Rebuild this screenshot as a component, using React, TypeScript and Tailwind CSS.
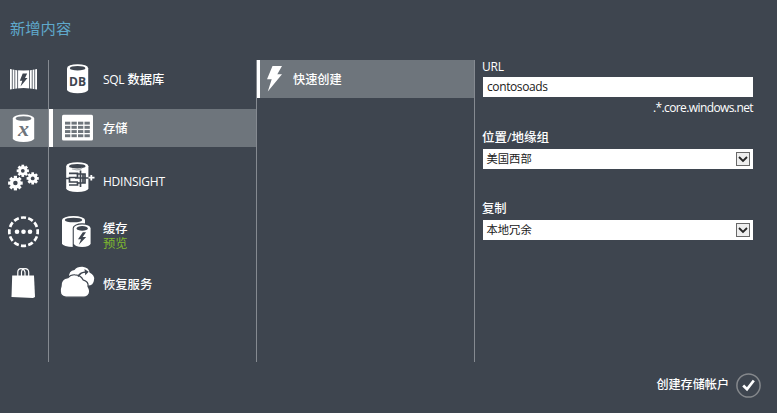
import React from 'react';

const DARK = '#3e454f';
const SEL = '#6e757c';
const BOLT = 'M5.5 0H15L10.3 8.2H15L0.8 25.5L4.7 13.2H0Z';

function Gear({ cx, cy, r }: { cx: number; cy: number; r: number }) {
  return (
    <g transform={`translate(${cx} ${cy})`}>
      {[0, 45, 90, 135].map((a) => (
        <rect key={a} x={-r * 0.22} y={-r} width={r * 0.44} height={r * 2} transform={`rotate(${a})`} fill="#fff" />
      ))}
      <circle r={r * 0.77} fill="#fff" />
      <circle r={r * 0.31} fill={DARK} />
    </g>
  );
}

function Cylinder({ x, y, w, h, hole }: { x: number; y: number; w: number; h: number; hole: string }) {
  const rx = w / 2;
  return (
    <g>
      <path
        d={`M${x} ${y + 4}A${rx} 4 0 0 1 ${x + w} ${y + 4}V${y + h - 3.5}A${rx} 3.5 0 0 1 ${x} ${y + h - 3.5}Z`}
        fill="#fff"
      />
      <ellipse cx={x + rx} cy={y + 4} rx={rx - 2.8} ry={2.3} fill={hole} />
    </g>
  );
}

function Icon({ children }: { children: React.ReactNode }) {
  return (
    <svg className="block h-[38px] w-12 shrink-0" viewBox="0 0 48 38">
      {children}
    </svg>
  );
}

function WebIcon() {
  return (
    <Icon>
      <path d="M10 9Q23.5 12 37 9V29.5Q23.5 26.5 10 29.5Z" fill="#fff" />
      <path d="M12.3 9V30M14.8 9V30M17.6 9V30M29.5 9V30M32.2 9V30M34.7 9V30" stroke={DARK} strokeWidth=".8" />
      <path d="M22.7 13.5H27.2L25 18H27.5L20.5 26.5L22.3 20.7H19.8Z" fill={DARK} />
    </Icon>
  );
}

function VariableIcon() {
  return (
    <Icon>
      <Cylinder x={12.8} y={5.5} w={21.4} h={27.5} hole={SEL} />
      <text x="23.5" y="27" textAnchor="middle" fontSize="20" fontStyle="italic" fontWeight="700" fontFamily="Liberation Serif, serif" fill={SEL} textLength="11" lengthAdjust="spacingAndGlyphs">x</text>
    </Icon>
  );
}

function GearsIcon() {
  return (
    <Icon>
      <Gear cx={22.8} cy={12.8} r={6.1} />
      <Gear cx={32.7} cy={20.4} r={6.1} />
      <Gear cx={15.4} cy={25.1} r={7.3} />
    </Icon>
  );
}

function DotsIcon() {
  return (
    <Icon>
      <circle cx="23.5" cy="19.7" r="14.2" fill="none" stroke="#fff" strokeWidth="2.7" pathLength="120" strokeDasharray="7 3" strokeDashoffset="3.5" />
      <circle cx="17" cy="19.7" r="2.3" fill="#fff" />
      <circle cx="23.5" cy="19.7" r="2.3" fill="#fff" />
      <circle cx="30" cy="19.7" r="2.3" fill="#fff" />
    </Icon>
  );
}

function BagIcon() {
  return (
    <Icon>
      <path d="M12.2 11.5H34L35 33L33 34L11.5 33Z" fill="#fff" />
      <path d="M17.8 14V8Q18 4.6 21 4.6Q24 4.6 25 8V14M21.5 12V8Q22 4.6 25 4.6Q28.4 4.6 28.7 8V14" fill="none" stroke="#fff" strokeWidth="1.2" />
    </Icon>
  );
}

function DbIcon() {
  return (
    <Icon>
      <Cylinder x={14} y={4.2} w={21.2} h={29} hole={DARK} />
      <text x="24.5" y="26" textAnchor="middle" fontSize="12.5" fontWeight="700" fontFamily="Open Sans, sans-serif" fill={DARK} textLength="17" lengthAdjust="spacingAndGlyphs">DB</text>
    </Icon>
  );
}

function TableIcon() {
  return (
    <Icon>
      <rect x="9" y="5.8" width="31" height="25.7" rx="1.5" fill="#fff" />
      {[12.7, 16.9, 21.1, 25.3].map((y) =>
        [12, 18.5, 25, 31.5].map((x) => <rect key={`${x}-${y}`} x={x} y={y} width="5.3" height="2.9" fill={SEL} />),
      )}
    </Icon>
  );
}

function HdIcon() {
  return (
    <Icon>
      <Cylinder x={13.2} y={4.2} w={22.2} h={29.8} hole={DARK} />
      <path d="M16 15.3H24.5V19.5H16.5V24H25M12.5 20.5H16M16 27H24.5V24M27.5 12.5V29M23.5 16H32V25H24M22 20H36M30 16V25" fill="none" stroke={DARK} strokeWidth="1.7" />
      <path d="M35.5 19.7H41.5M38.3 17V22.4" stroke="#fff" strokeWidth="1.8" />
      <path d="M19 11Q26 13 29 10" fill="none" stroke="#aeb2b6" strokeWidth="1.2" />
    </Icon>
  );
}

function CacheIcon() {
  return (
    <Icon>
      <Cylinder x={9} y={4} w={23} h={31} hole={DARK} />
      <path d="M19.7 16A9.3 4.7 0 0 1 38.3 16V36H19.7Z" fill={DARK} />
      <Cylinder x={20.8} y={12.4} w={16.8} h={22.6} hole={DARK} />
      <path d="M29.8 20.2L25 27.3H28L25.8 32.7L33.2 25H29.7L33 20.2Z" fill={DARK} />
    </Icon>
  );
}

function CloudIcon() {
  return (
    <Icon>
      <path d="M16 14Q15.5 6.5 21.5 6Q24 2.5 29.5 2.7Q36 3.5 36.5 8.5Q42 11 41 16Q40.5 21.5 35 21.5L24 18Z" fill="#fff" />
      <path d="M8 22.5Q7.6 14.5 15 13.7Q17.5 10.5 22 10.8Q28 11 30 15.8Q36 17.5 35 22.5Q38.5 28 35 31.5Q33 33.2 31 33.2H13Q7.5 32.5 7.3 27.5Q7 24.5 8 22.5Z" fill="#fff" stroke={DARK} strokeWidth="1.2" />
      <path d="M25 12.5Q27.5 8.2 33 8" fill="none" stroke={DARK} strokeWidth="1.6" />
      <path d="M31.5 5L35.7 7.8L32.3 11.3Z" fill={DARK} />
    </Icon>
  );
}

function SelectBox({ value }: { value: string }) {
  return (
    <div className="flex h-5 w-[270px] items-center justify-between bg-white pr-[3px] pl-[3.5px] text-[11.3px] text-[#202020]">
      <span className="-mt-px leading-4">{value}</span>
      <span className="flex size-3.5 items-center justify-center border border-[#686868] bg-[#eeeeee]">
        <svg className="block h-2 w-2.5" viewBox="0 0 10 8">
          <path d="M1 2L5 6L9 2" fill="none" stroke="#252525" strokeWidth="1.8" />
        </svg>
      </span>
    </div>
  );
}

export default function App() {
  return (
    <div className="flex h-[413px] w-[777px] flex-col overflow-hidden bg-[#3e454f] font-['Open_Sans','Noto_Sans_CJK_SC',sans-serif] whitespace-nowrap text-white">
      <h1 className="h-[60px] pt-[17px] pl-2.5 text-[15.3px] leading-[22px] font-normal text-[#5fa9cc]">新增内容</h1>

      <div className="flex h-[302px]">
        <nav className="flex w-[49px] flex-col border-r border-[#858a91]">
          <WebIcon />
          <div className="mt-[11px] bg-[#6e757c]"><VariableIcon /></div>
          <div className="mt-[11px]"><GearsIcon /></div>
          <div className="mt-[16px]"><DotsIcon /></div>
          <div className="mt-[14px]"><BagIcon /></div>
        </nav>

        <div className="flex w-[208px] flex-col border-r border-[#858a91] text-[12.3px] leading-[15px] font-medium">
          <div className="flex h-[38px] items-center pl-1">
            <DbIcon />
            <span className="ml-[2px]"><span className="text-[12px] font-normal tracking-[-0.3px]">SQL</span> 数据库</span>
          </div>
          <div className="mt-[11px] flex h-[38px] items-center border-l-4 border-white bg-[#6e757c]">
            <TableIcon />
            <span className="ml-[2px]">存储</span>
          </div>
          <div className="mt-[11px] flex h-[38px] items-center pl-1">
            <HdIcon />
            <span className="mt-2 ml-[2px] text-[12px] font-normal tracking-[-0.25px]">HDINSIGHT</span>
          </div>
          <div className="mt-[16px] flex h-[38px] items-center pl-1">
            <CacheIcon />
            <span className="mt-2.5 ml-[2px] flex flex-col"><span>缓存</span><span className="font-normal text-[#7fb82e]">预览</span></span>
          </div>
          <div className="mt-[14px] flex h-[38px] items-center pl-1">
            <CloudIcon />
            <span className="mt-[3px] ml-[2px]">恢复服务</span>
          </div>
        </div>

        <div className="w-[218px] border-r border-[#858a91]">
          <div className="flex h-[38px] items-center border-l-[3px] border-white bg-[#6e757c] text-[12.2px] font-medium">
            <svg className="ml-[7px] block h-[26px] w-[15px]" viewBox="0 0 15 26"><path d={BOLT} fill="#fff" /></svg>
            <span className="mt-[2px] ml-[11px] leading-4">快速创建</span>
          </div>
        </div>

        <div className="ml-2 flex w-[270px] flex-col text-[12px]">
          <label className="-ml-px h-[17px] leading-[14px] tracking-[-0.2px]">URL</label>
          <div className="h-5 bg-white pl-1 leading-[20px] tracking-[-0.4px] text-[#202020]">contosoads</div>
          <div className="h-[31px] pt-[3px] text-right leading-4 tracking-[-0.6px]">.*.core.windows.net</div>
          <label className="-ml-px h-[21px] text-[12.5px] leading-[19px] font-medium">位置/地缘组</label>
          <SelectBox value="美国西部" />
          <label className="mt-[30px] -ml-px h-[21px] text-[12.3px] leading-[19px] font-medium">复制</label>
          <SelectBox value="本地冗余" />
        </div>
      </div>

      <div className="flex h-[46px] items-center justify-end pr-4">
        <span className="mt-px mr-[7px] text-[12.1px] font-medium">创建存储帐户</span>
        <svg className="block size-[25px]" viewBox="0 0 25 25">
          <circle cx="12.5" cy="12.5" r="11.6" fill="none" stroke="#85888c" strokeWidth="1.5" />
          <path d="M7.2 12.5L11 16.3L17.8 7.5" fill="none" stroke="#fff" strokeWidth="2.7" />
        </svg>
      </div>
    </div>
  );
}
